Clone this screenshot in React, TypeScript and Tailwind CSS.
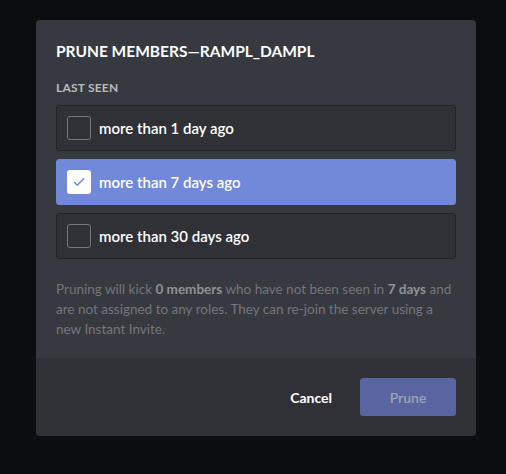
import React from "react";

function Option({ label, checked }: { label: string; checked?: boolean }) {
  return (
    <div
      className={
        checked
          ? "flex items-center h-[46px] px-[10px] rounded-[3px] bg-[#7289da] border border-[#7289da]"
          : "flex items-center h-[46px] px-[10px] rounded-[3px] bg-[#2f3136] border border-[#202225]"
      }
    >
      {checked ? (
        <div className="w-[24px] h-[24px] rounded-[3px] bg-white flex items-center justify-center">
          <svg width="14" height="14" viewBox="0 0 24 24" fill="none">
            <path d="M4 12.5l5 5L20 6.5" stroke="#7289da" strokeWidth="2.6" strokeLinecap="round" strokeLinejoin="round" />
          </svg>
        </div>
      ) : (
        <div className="w-[24px] h-[24px] rounded-[3px] border border-[#72767d]" />
      )}
      <span className="ml-[8px] text-[15px] font-semibold text-white leading-none">{label}</span>
    </div>
  );
}

export default function App() {
  return (
    <div
      className="w-[506px] h-[474px] bg-[#0c0d0f] pt-[20px] pl-[36px]"
      style={{ fontFamily: "Lato, 'Noto Sans', sans-serif" }}
    >
      <div className="w-[440px] h-[416px] rounded-[4px] bg-[#36393f] flex flex-col overflow-hidden">
        <div className="px-[20px] pt-[21px] flex-1">
          <h2 className="text-[15.5px] font-bold text-white uppercase leading-[20px]">
            Prune Members—rampl_dampl
          </h2>
          <div className="mt-[19px] text-[12px] font-bold uppercase text-[#b9bbbe] leading-[16px] tracking-[0.2px]">
            Last seen
          </div>
          <div className="mt-[9px] flex flex-col gap-[8px]">
            <Option label="more than 1 day ago" />
            <Option label="more than 7 days ago" checked />
            <Option label="more than 30 days ago" />
          </div>
          <p className="mt-[20px] text-[13.5px] leading-[20px] text-[#72767d]">
            Pruning will kick <span className="font-bold text-[#8e9297]">0 members</span> who have not been seen in{" "}
            <span className="font-bold text-[#8e9297]">7 days</span> and are not assigned to any roles. They can re-join
            the server using a new Instant Invite.
          </p>
        </div>
        <div className="h-[78px] bg-[#2f3136] flex items-center justify-end px-[20px]">
          <button className="text-[14px] font-bold text-white mr-[28px]">Cancel</button>
          <button className="w-[96px] h-[38px] rounded-[3px] bg-[#5865a0] text-[14px] font-semibold text-[#9ea2b8]">
            Prune
          </button>
        </div>
      </div>
    </div>
  );
}
